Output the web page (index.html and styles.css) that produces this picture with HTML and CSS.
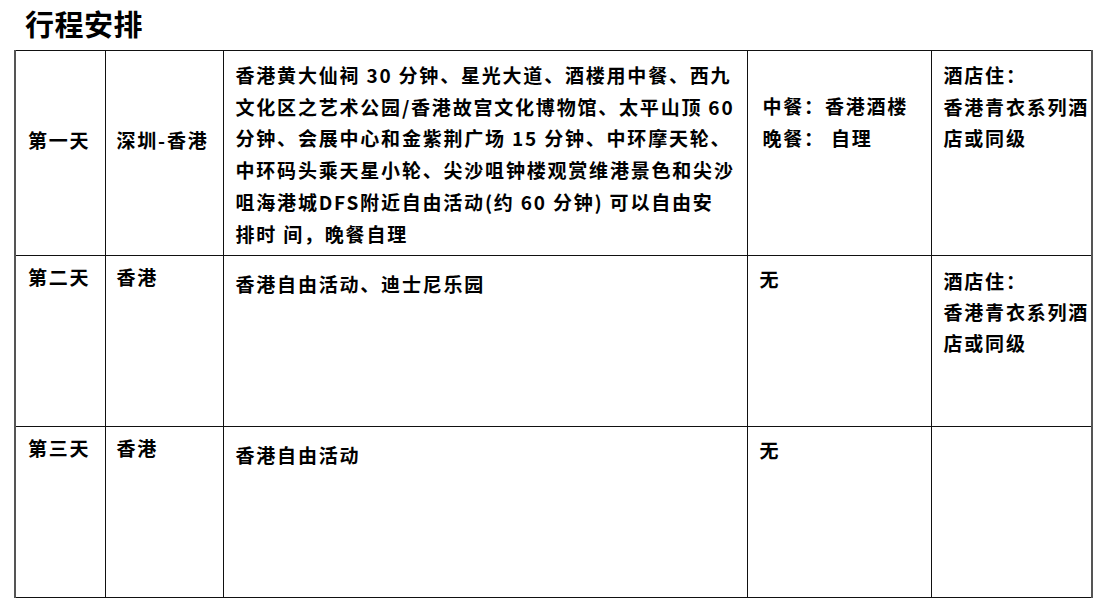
FILE: index.html
```html
<!DOCTYPE html>
<html lang="zh-CN">
<head>
<meta charset="utf-8">
<title>行程安排</title>
<link rel="stylesheet" href="styles.css">
</head>
<body>
<h1 class="title">行程安排</h1>
<table class="itinerary">
  <colgroup>
    <col class="c-day">
    <col class="c-route">
    <col class="c-plan">
    <col class="c-meal">
    <col class="c-hotel">
  </colgroup>
  <tr class="row-first">
    <td class="day mid">第一天</td>
    <td class="route mid">深圳-香港</td>
    <td class="plan">香港黄大仙祠 30 分钟、星光大道、酒楼用中餐、西九<br>文化区之艺术公园/香港故宫文化博物馆、太平山顶 60<br>分钟、会展中心和金紫荆广场 15 分钟、中环摩天轮、<br>中环码头乘天星小轮、尖沙咀钟楼观赏维港景色和尖沙<br>咀海港城DFS附近自由活动(约 60 分钟) 可以自由安<br>排时 间，晚餐自理</td>
    <td class="meal meal-first">中餐：香港酒楼<br>晚餐： 自理</td>
    <td class="hotel">酒店住：<br>香港青衣系列酒<br>店或同级</td>
  </tr>
  <tr class="row-next">
    <td class="day">第二天</td>
    <td class="route">香港</td>
    <td class="plan plan-short">香港自由活动、迪士尼乐园</td>
    <td class="meal">无</td>
    <td class="hotel hotel-next">酒店住：<br>香港青衣系列酒<br>店或同级</td>
  </tr>
  <tr class="row-next">
    <td class="day">第三天</td>
    <td class="route">香港</td>
    <td class="plan plan-short">香港自由活动</td>
    <td class="meal">无</td>
    <td class="hotel"></td>
  </tr>
</table>
</body>
</html>
```

FILE: styles.css
```css
html, body {
  margin: 0;
  padding: 0;
  background: #ffffff;
}

body {
  font-family: "Noto Sans CJK SC", "Noto Sans", sans-serif;
  color: #000000;
}

.title {
  margin: 0 0 8px 0;
  padding: 4px 0 0 25px;
  font-size: 29px;
  font-weight: 700;
  line-height: 38px;
  letter-spacing: 0.5px;
}

.itinerary {
  border-collapse: collapse;
  table-layout: fixed;
  width: 1078px;
  margin-left: 14px;
}

.c-day { width: 90px; }
.c-route { width: 118px; }
.c-plan { width: 524px; }
.c-meal { width: 184px; }
.c-hotel { width: 161px; }

.itinerary td {
  border: 1px solid #111111;
  padding: 0 0 0 12px;
  vertical-align: top;
  font-size: 19px;
  font-weight: 700;
  letter-spacing: 1.8px;
  line-height: 31.7px;
  white-space: nowrap;
  overflow: hidden;
}

.itinerary td:first-child {
  border-left: 2px solid #555555;
}

.itinerary td:last-child {
  border-right: 2px solid #555555;
}

.row-first {
  height: 205px;
}

.row-first td {
  padding-top: 8px;
}

.row-first td.mid {
  vertical-align: middle;
  padding-top: 0;
  padding-bottom: 26px;
}

.itinerary td.route {
  padding-left: 11px;
}

.row-first td.meal-first {
  padding-top: 39px;
  padding-left: 15px;
}

.row-next {
  height: 171px;
}

.row-next td {
  padding-top: 5px;
}

.row-next td.plan-short {
  padding-top: 12px;
}

.row-next td.meal {
  padding-top: 7px;
}

.row-next td.hotel-next {
  padding-top: 9px;
  line-height: 31px;
}
```
